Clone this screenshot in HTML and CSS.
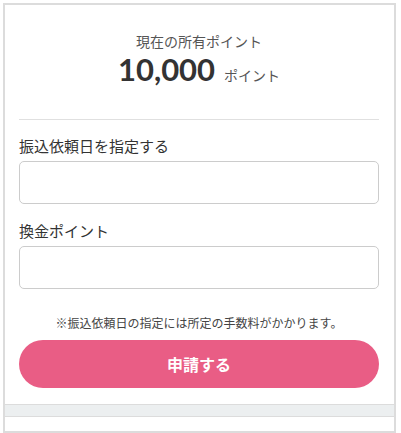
FILE: index.html
```
<!DOCTYPE html>
<html lang="ja">
<head>
    <meta charset="UTF-8">
    <meta name="viewport" content="width=device-width, initial-scale=1.0">
    <title>ポイント換金</title>
    <link rel="stylesheet" href="styles.css">
</head>
<body>

<div class="frame">
    <div class="card">
        <div class="points">
            <p class="points-label">現在の所有ポイント</p>
            <p class="points-value"><span class="num">10,000</span><span class="unit">ポイント</span></p>
        </div>

        <form class="exchange-form">
            <label for="transferDate">振込依頼日を指定する</label>
            <input type="text" id="transferDate" name="transferDate">

            <label for="amount">換金ポイント</label>
            <input type="text" id="amount" name="amount">

            <p class="note">※振込依頼日の指定には所定の手数料がかかります。</p>

            <button type="submit" class="submit-btn">申請する</button>
        </form>
    </div>
    <div class="band"></div>
    <div class="foot"></div>
</div>

</body>
</html>
```

FILE: styles.css
```
body {
    font-family: "Noto Sans CJK JP", "Noto Sans", sans-serif;
    margin: 0;
    padding: 3px 5px 3px 3px;
    background: #fff;
    color: #333;
}
.frame {
    border: 2px solid #dcdcdc;
}
.card {
    padding: 0 15px 16px 14px;
}
.points {
    text-align: center;
    padding-top: 26px;
    padding-bottom: 26px;
    border-bottom: 1px solid #e0e0e0;
}
.points-label {
    margin: 0;
    font-size: 14px;
    line-height: 20px;
    color: #555;
}
.points-value {
    margin: 0;
    line-height: 36px;
}
.num {
    font-family: Lato, sans-serif;
    font-weight: bold;
    font-size: 31px;
    color: #333;
}
.unit {
    font-size: 14px;
    color: #555;
    margin-left: 9px;
}
.exchange-form label {
    display: block;
    font-size: 15px;
    line-height: 22px;
    color: #333;
    margin-top: 15px;
    margin-bottom: 4px;
}
.exchange-form input {
    display: block;
    box-sizing: border-box;
    width: 100%;
    height: 43px;
    margin: 0;
    border: 1px solid #ccc;
    border-radius: 5px;
    padding: 8px;
}
.exchange-form input + label {
    margin-top: 16px;
}
.note {
    margin: 25px 0 8px;
    text-align: center;
    font-size: 12px;
    line-height: 18px;
    color: #444;
}
.submit-btn {
    display: block;
    width: 100%;
    height: 48px;
    border: none;
    border-radius: 24px;
    background: #e95d85;
    color: #fff;
    font-family: "Noto Sans CJK JP", sans-serif;
    font-size: 16px;
    font-weight: bold;
    cursor: pointer;
}
.band {
    height: 11px;
    background: #eceff0;
    border-top: 1px solid #dcdcdc;
    border-bottom: 1px solid #dcdcdc;
}
.foot {
    height: 14px;
}
```
